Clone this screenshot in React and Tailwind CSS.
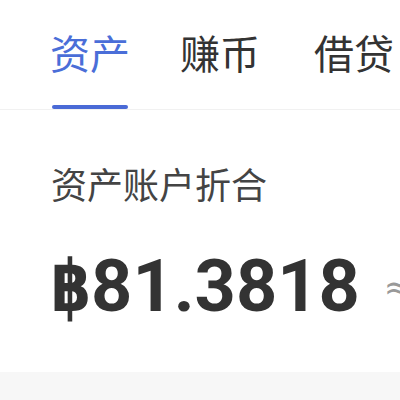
import React from 'react';

const cjk = { fontFamily: '"Noto Sans CJK SC", "Noto Sans", sans-serif' };

export default function App() {
  const tabs = [
    { label: '资产', active: true, ml: 'ml-0' },
    { label: '赚币', active: false, ml: 'ml-[50px]' },
    { label: '借贷', active: false, ml: 'ml-[54px]' },
  ];

  return (
    <div className="w-[400px] h-[400px] bg-white overflow-hidden flex flex-col" style={cjk}>
      <div className="flex pl-[50px] pt-[32px] border-b border-[#f1f1f1] shrink-0">
        {tabs.map((t) => (
          <div key={t.label} className={`flex flex-col items-center shrink-0 ${t.ml}`}>
            <span
              className={`text-[40px] leading-[40px] whitespace-nowrap ${
                t.active ? 'text-[#4a6ed8]' : 'text-[#333333]'
              }`}
            >
              {t.label}
            </span>
            <div
              className={`mt-[33px] h-[4px] w-[76px] rounded-full ${
                t.active ? 'bg-[#4a6ad6]' : 'bg-transparent'
              }`}
            />
          </div>
        ))}
      </div>

      <div className="flex-1 flex flex-col pl-[51px]">
        <div className="mt-[55px] text-[36px] leading-[36px] text-[#444444] whitespace-nowrap">
          资产账户折合
        </div>
        <div className="mt-[49px] flex items-center whitespace-nowrap">
          <span
            className="text-[72px] leading-[72px] font-bold text-[#333333]"
            style={{ fontFamily: 'Roboto, "DejaVu Sans", sans-serif' }}
          >
            <span
              className="inline-block scale-x-[0.8] origin-left -mr-[10px]"
              style={{ fontFamily: '"DejaVu Sans", sans-serif' }}
            >
              ฿
            </span>
            81.3818
          </span>
          <span
            className="ml-[24px] text-[34px] leading-[34px] text-[#999999]"
            style={{ fontFamily: '"DejaVu Sans", sans-serif' }}
          >
            ≈ $2.46
          </span>
        </div>
      </div>

      <div className="h-[28px] bg-[#f7f7f7] shrink-0" />
    </div>
  );
}
